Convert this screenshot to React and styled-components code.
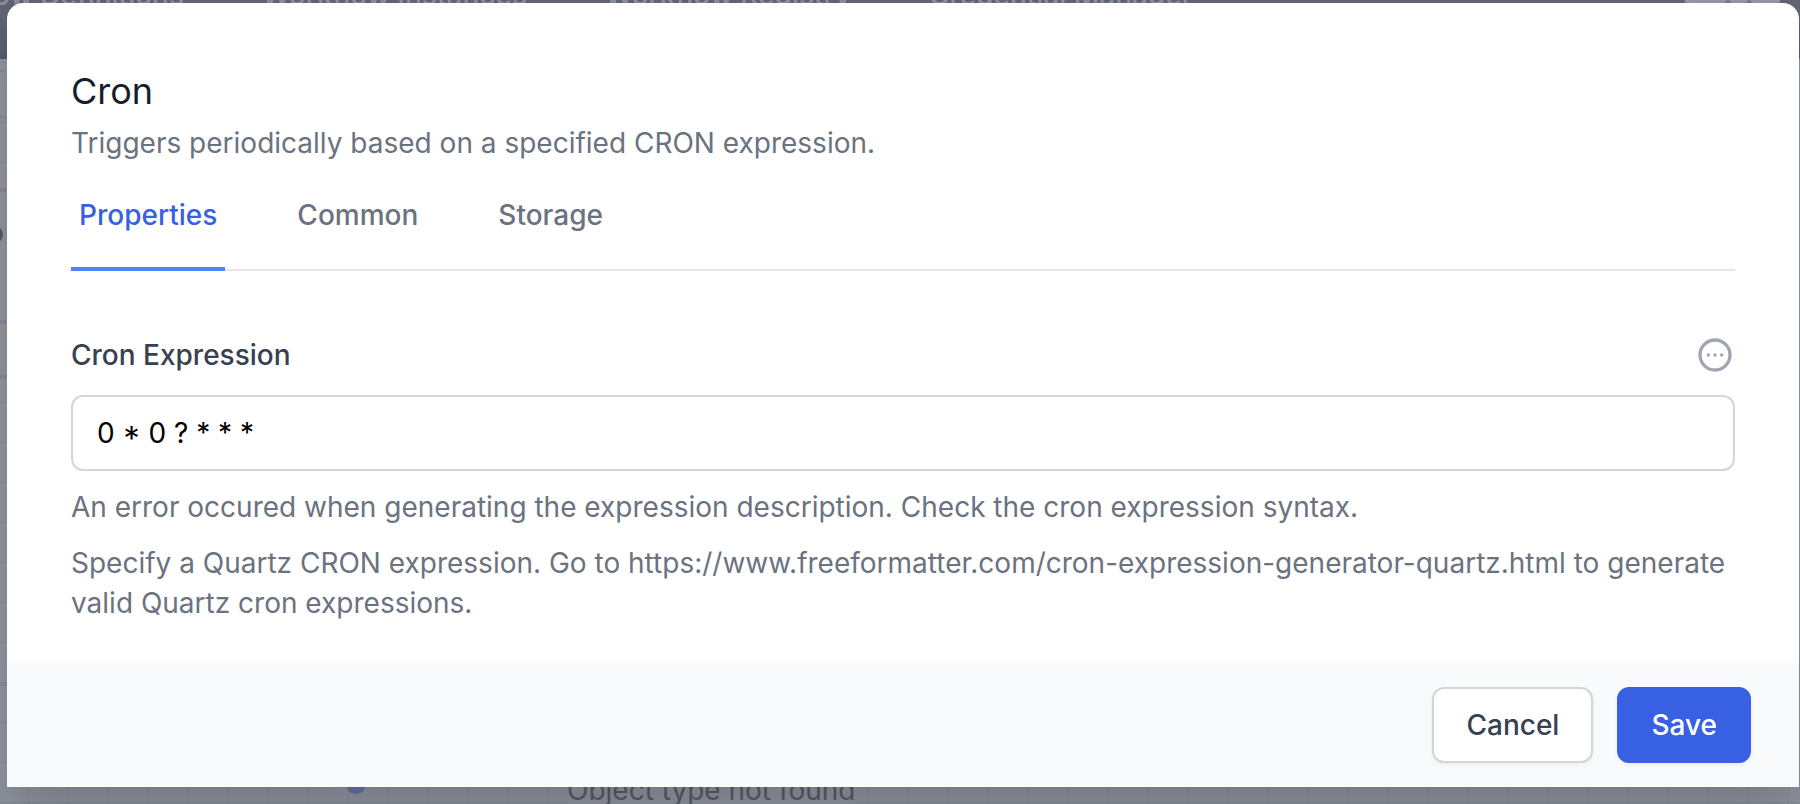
import React, { useState } from "react";
import styled, { createGlobalStyle } from "styled-components";

const Global = createGlobalStyle`
  *, *::before, *::after { box-sizing: border-box; }
  html, body { margin: 0; height: 100%; }
  body { background: #8b8f9a; -webkit-font-smoothing: antialiased; }
  body, button, input { font-family: Inter, "Liberation Sans", sans-serif; }
  h2, p { margin: 0; }
`;

const Screen = styled.div`
  position: relative;
  min-height: 100vh;
  padding: 3px 1px 16px 7px;
  overflow: hidden;
`;

const Backdrop = styled.div`
  position: absolute;
  inset: 0;
  overflow: hidden;
  display: flex;
  flex-direction: column;
`;

const TopBar = styled.nav`
  display: flex;
  flex: none;
  align-items: center;
  gap: 78px;
  height: 128px;
  margin-top: -69px;
  padding-right: 20px;
  background: linear-gradient(#5f6373 60%, #555a69);
`;

const TopLink = styled.a`
  font-size: 28px;
  line-height: 40px;
  font-weight: 500;
  color: #8b8f9a;
  text-decoration: none;
  white-space: nowrap;

  &:first-child { margin-left: -95px; }
`;

const Avatar = styled.svg`
  margin-left: auto;
`;

const Canvas = styled.div`
  position: relative;
  flex: 1;
  background-color: #8b8f9a;
  background-image:
    linear-gradient(to right, #82868f 1px, transparent 1px),
    linear-gradient(to bottom, #82868f 1px, transparent 1px);
  background-size: 40px 40px;
  background-position: 28px 23px;
`;

const Activity = styled.div`
  position: absolute;
  left: 0;
  top: ${(p) => p.$y}px;
  width: 20px;
  height: ${(p) => p.$h}px;
  background: #8b8f9a;
  border: solid #82858f;
  border-width: ${(p) => p.$line}px 0;
`;

const Port = styled.div`
  position: absolute;
  left: 1px;
  top: ${(p) => p.$y}px;
  width: 12px;
  height: 4px;
  background: #978d83;
`;

const Knob = styled.div`
  position: absolute;
  left: ${(p) => p.$x}px;
  top: ${(p) => p.$y}px;
  width: ${(p) => p.$size}px;
  height: ${(p) => p.$size}px;
  border-radius: 50%;
  background: ${(p) => p.$color};
`;

const NodeText = styled.p`
  position: absolute;
  left: 567px;
  top: 711px;
  background: #8b8f9a;
  font-size: 28px;
  line-height: 40px;
  color: #545965;
  white-space: nowrap;
`;

const Dialog = styled.form`
  position: relative;
  border-radius: 16px 16px 0 0;
  background: #fff;
  box-shadow: 0 40px 50px -10px rgba(0, 0, 0, 0.1), 0 20px 20px -10px rgba(0, 0, 0, 0.04);
`;

const Body = styled.div`
  padding: 64px 64px 40px;
`;

const Title = styled.h2`
  font-size: 36px;
  line-height: 48px;
  font-weight: 400;
  color: #161e2e;
`;

const Text = styled.p`
  margin-top: ${(p) => p.$gap}px;
  font-size: 28px;
  line-height: 40px;
  color: #6b7280;
`;

const Tabs = styled.div`
  display: flex;
  gap: 64px;
  border-bottom: 2px solid #e5e7eb;
`;

const Tab = styled.button`
  margin: 0 0 -2px;
  padding: 32px 8px;
  border: 0;
  border-bottom: 4px solid ${(p) => (p.$active ? "#4f83f1" : "transparent")};
  background: none;
  font-size: 28px;
  line-height: 40px;
  font-weight: 500;
  color: ${(p) => (p.$active ? "#3860e2" : "#6b7280")};
`;

const FieldHead = styled.div`
  display: flex;
  align-items: center;
  justify-content: space-between;
  margin: 64px 0 20px;
`;

const Label = styled.label`
  font-size: 28px;
  line-height: 40px;
  font-weight: 500;
  color: #374151;
`;

const IconButton = styled.button`
  display: flex;
  padding: 0;
  border: 0;
  background: none;
  color: #9fa6b2;
`;

const Input = styled.input`
  display: block;
  width: 100%;
  padding: 16px 24px;
  border: 2px solid #d2d6dc;
  border-radius: 12px;
  font-size: 28px;
  line-height: 40px;
  height: 76px;
  color: #000;
  background: #fff;
`;

const Footer = styled.div`
  display: flex;
  justify-content: flex-end;
  gap: 24px;
  padding: 24px 48px;
  background: #f9fafc;
`;

const Button = styled.button`
  padding: 16px 32px;
  border: 2px solid ${(p) => (p.$primary ? "#3860e2" : "#d2d6dc")};
  border-radius: 12px;
  background: ${(p) => (p.$primary ? "#3860e2" : "#fff")};
  color: ${(p) => (p.$primary ? "#fff" : "#374151")};
  font-size: 28px;
  line-height: 40px;
  font-weight: 500;
  box-shadow: 0 2px 4px rgba(0, 0, 0, 0.05);
`;

const NAV = ["Workflow Definitions", "Workflow Instances", "Workflow Registry", "Credential Manager"];

const TABS = ["Properties", "Common", "Storage"];

export default function App() {
  const [tab, setTab] = useState("Properties");
  const [value, setValue] = useState("0 * 0 ? * * *");
  return (
    <Screen>
      <Global />
      <Backdrop aria-hidden="true">
        <TopBar>
          {NAV.map((label) => (
            <TopLink key={label} href="#">{label}</TopLink>
          ))}
          <Avatar width="96" height="64" viewBox="0 0 96 64">
            <path d="M0 0H96V38Q95 42 92 44H5Q0 40 0 34Z" fill="#9195a0" />
            <path d="M39 41l5-5 5 5zM60 41l5-5 5 5z" fill="#757a87" />
          </Avatar>
        </TopBar>
        <Canvas>
          <Activity $y={11} $h={48} $line={2} />
          <Activity $y={129} $h={136} $line={4} />
          <Activity $y={261} $h={59} $line={4} />
          <Activity $y={623} $h={4} $line={2} />
          <Port $y={121} />
          <Port $y={269} />
          <Knob $x={-14} $y={167} $size={17} $color="#51555f" />
          <Knob $x={346} $y={715} $size={20} $color="#60719f" />
          <NodeText>Object type not found</NodeText>
        </Canvas>
      </Backdrop>
      <Dialog role="dialog" aria-labelledby="title" onSubmit={(e) => e.preventDefault()}>
        <Body>
          <Title id="title">Cron</Title>
          <Text $gap={8}>Triggers periodically based on a specified CRON expression.</Text>
          <Tabs role="tablist">
            {TABS.map((t) => (
              <Tab key={t} type="button" role="tab" aria-selected={t === tab} $active={t === tab} onClick={() => setTab(t)}>
                {t}
              </Tab>
            ))}
          </Tabs>
          <FieldHead>
            <Label htmlFor="cron">Cron Expression</Label>
            <IconButton type="button" aria-label="Syntax options">
              <svg width="40" height="40" viewBox="0 0 24 24" fill="none" stroke="currentColor" strokeWidth="2" strokeLinecap="round" strokeLinejoin="round">
                <path d="M8 12h.01M12 12h.01M16 12h.01M21 12a9 9 0 11-18 0 9 9 0 0118 0z" />
              </svg>
            </IconButton>
          </FieldHead>
          <Input id="cron" type="text" value={value} onChange={(e) => setValue(e.target.value)} />
          <Text $gap={16}>An error occured when generating the expression description. Check the cron expression syntax.</Text>
          <Text $gap={16}>
            Specify a Quartz CRON expression. Go to https://www.freeformatter.com/cron-expression-generator-quartz.html to generate valid Quartz cron expressions.
          </Text>
        </Body>
        <Footer>
          <Button type="button">Cancel</Button>
          <Button type="submit" $primary>Save</Button>
        </Footer>
      </Dialog>
    </Screen>
  );
}
